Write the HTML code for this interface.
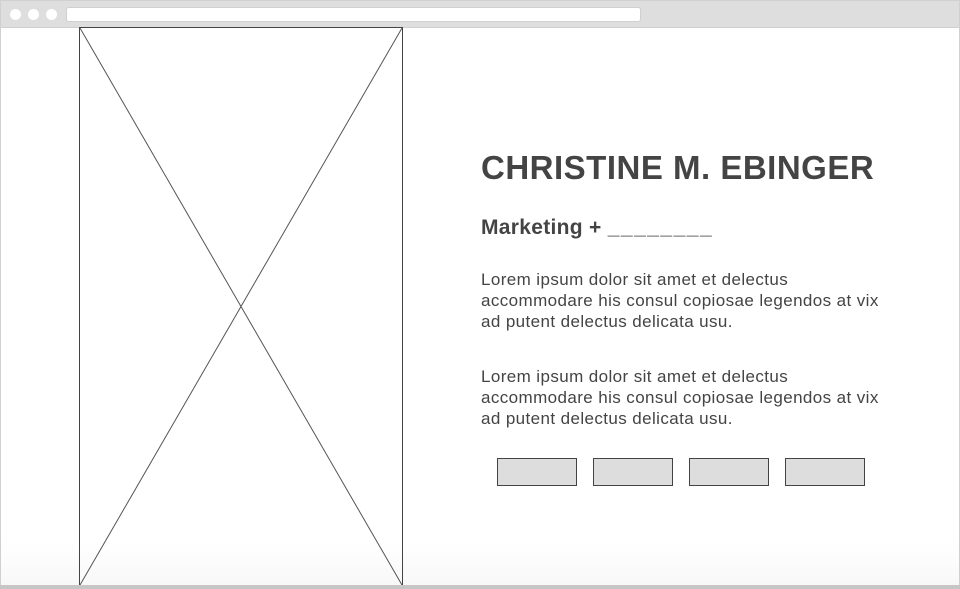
<!DOCTYPE html>
<html><head><style>
body{margin:0;width:960px;height:589px;overflow:hidden;background:#fff;position:relative;font-family:"Liberation Sans",sans-serif;color:#444}
.frame{position:absolute;left:0;top:0;width:958px;height:587px;border:1px solid #d0d0d0;border-bottom:none;background:linear-gradient(#fff 540px,#f8f8f8 585px)}
.bar{position:absolute;left:1px;top:1px;width:958px;height:26px;background:#dedede;border-bottom:1px solid #cfcfcf}
.dot{position:absolute;top:9px;width:11px;height:11px;border-radius:50%;background:#fff}
.url{position:absolute;left:66px;top:7px;width:575px;height:15px;background:#fff;border-radius:3px;border:1px solid #d0d0d0;box-sizing:border-box}
.bot{position:absolute;left:0;top:585px;width:960px;height:4px;background:#c6c6c6}
h1{position:absolute;left:481px;top:149px;margin:0;font-size:33px;letter-spacing:0.5px;font-weight:bold;color:#444;white-space:nowrap}
h2{position:absolute;left:481px;top:216px;margin:0;font-size:21px;letter-spacing:0.3px;font-weight:bold;color:#444;white-space:nowrap}
p{position:absolute;left:481px;margin:0;font-size:17px;letter-spacing:0.4px;line-height:21px;width:460px;color:#444;white-space:nowrap}
.b{position:absolute;top:458px;width:78px;height:26px;background:#ddd;border:1px solid #444}
</style></head><body>
<div class="frame"></div>
<div class="bar"></div>
<div class="dot" style="left:10px"></div><div class="dot" style="left:28px"></div><div class="dot" style="left:46px"></div>
<div class="url"></div>
<svg style="position:absolute;left:0;top:0" width="960" height="589"><rect x="79.5" y="27.5" width="323" height="558" fill="none" stroke="#444"/><line x1="80" y1="28" x2="402" y2="585" stroke="#555"/><line x1="402" y1="28" x2="80" y2="585" stroke="#555"/></svg>
<h1>CHRISTINE M. EBINGER</h1>
<h2>Marketing + <span style="letter-spacing:1.5px">________</span></h2>
<p style="top:269px">Lorem ipsum dolor sit amet et delectus<br>accommodare his consul copiosae legendos at vix<br>ad putent delectus delicata usu.</p>
<p style="top:366px">Lorem ipsum dolor sit amet et delectus<br>accommodare his consul copiosae legendos at vix<br>ad putent delectus delicata usu.</p>
<div class="b" style="left:497px"></div><div class="b" style="left:593px"></div><div class="b" style="left:689px"></div><div class="b" style="left:785px"></div>
<div class="bot"></div>
</body></html>
